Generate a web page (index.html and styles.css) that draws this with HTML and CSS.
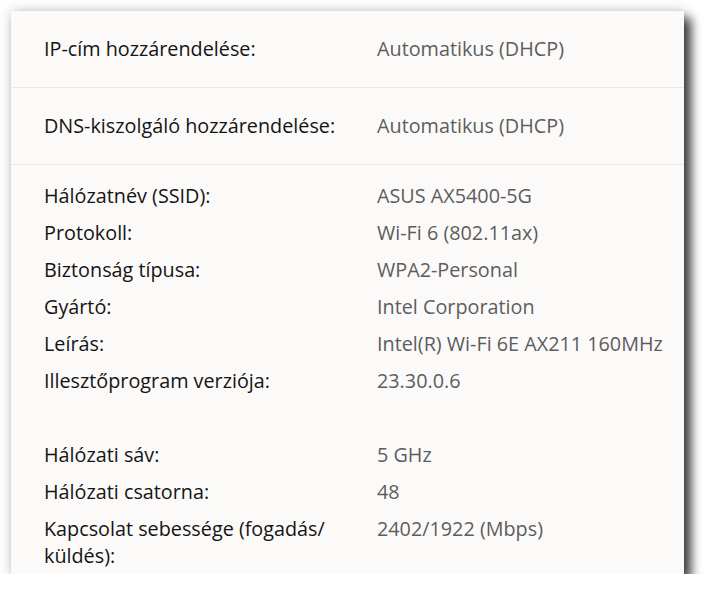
FILE: index.html
```html
<!DOCTYPE html>
<html lang="hu">
<head>
    <meta charset="UTF-8">
    <title>Wi-Fi tulajdonságok</title>
    <link rel="stylesheet" href="styles.css">
</head>
<body>

<div class="panel">
    <div class="section single">
        <div class="row">
            <span class="label">IP-cím hozzárendelése:</span>
            <span class="value">Automatikus (DHCP)</span>
        </div>
    </div>

    <div class="section single">
        <div class="row">
            <span class="label">DNS-kiszolgáló hozzárendelése:</span>
            <span class="value">Automatikus (DHCP)</span>
        </div>
    </div>

    <div class="section props">
        <div class="row">
            <span class="label">Hálózatnév (SSID):</span>
            <span class="value">ASUS AX5400-5G</span>
        </div>
        <div class="row">
            <span class="label">Protokoll:</span>
            <span class="value">Wi-Fi 6 (802.11ax)</span>
        </div>
        <div class="row">
            <span class="label">Biztonság típusa:</span>
            <span class="value">WPA2-Personal</span>
        </div>
        <div class="row">
            <span class="label">Gyártó:</span>
            <span class="value">Intel Corporation</span>
        </div>
        <div class="row">
            <span class="label">Leírás:</span>
            <span class="value">Intel(R) Wi-Fi 6E AX211 160MHz</span>
        </div>
        <div class="row">
            <span class="label">Illesztőprogram verziója:</span>
            <span class="value">23.30.0.6</span>
        </div>
        <div class="row spacer"></div>
        <div class="row">
            <span class="label">Hálózati sáv:</span>
            <span class="value">5 GHz</span>
        </div>
        <div class="row">
            <span class="label">Hálózati csatorna:</span>
            <span class="value">48</span>
        </div>
        <div class="row">
            <span class="label">Kapcsolat sebessége (fogadás/ küldés):</span>
            <span class="value">2402/1922 (Mbps)</span>
        </div>
    </div>
</div>

</body>
</html>
```

FILE: styles.css
```css
body {
    margin: 0;
    background: #ffffff;
    font-family: 'Open Sans', 'Noto Sans', sans-serif;
    font-size: 19.8px;
    line-height: 27px;
    color: #141414;
}

.panel {
    margin: 11px 0 0 11px;
    width: 673px;
    height: 563px;
    overflow: hidden;
    background: #fbfaf9;
    box-shadow: 7px 7px 10px rgba(0, 0, 0, 0.75), 0 0 12px rgba(0, 0, 0, 0.2);
}

.section {
    padding: 0 20px 0 33px;
    border-bottom: 1px solid #ebe9e7;
}

.single {
    padding-top: 24px;
    padding-bottom: 25px;
}

.props {
    border-bottom: none;
    padding-top: 17px;
    display: flex;
    flex-direction: column;
    gap: 10px;
}

.row {
    display: grid;
    grid-template-columns: 333px 1fr;
}

.spacer {
    height: 27px;
}

.label {
    padding-right: 40px;
}

.value {
    color: #5d5d5d;
}
```
